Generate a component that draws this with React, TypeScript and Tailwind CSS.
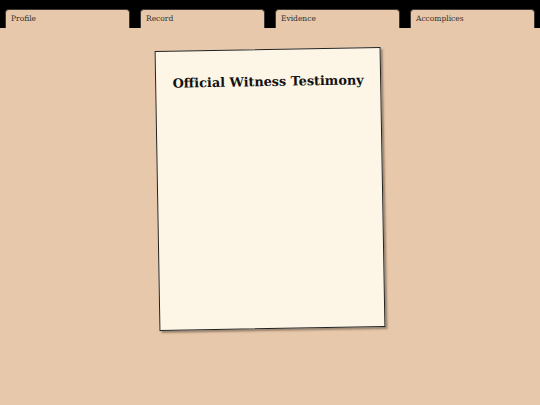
const tabs = ["Profile", "Record", "Evidence", "Accomplices"];

export default function App() {
  return (
    <div className="flex h-[405px] w-[540px] flex-col overflow-hidden bg-[#e8c8aa] font-['DejaVu_Serif',serif]">
      <nav className="flex h-[28px] shrink-0 items-end gap-[10px] bg-black px-[5px] pt-[9px]">
        {tabs.map((tab) => (
          <button
            key={tab}
            type="button"
            className="flex h-[19px] flex-1 items-center rounded-t-[4px] border-[1.5px] border-b-0 border-[#3d3833] bg-[#e8c8aa] px-[5px] text-left text-[7.5px] text-[#2e2e2e]"
          >
            {tab}
          </button>
        ))}
      </nav>

      <main className="flex flex-1 justify-center pt-[21px]">
        <div className="h-[280px] w-[226px] -rotate-1 border-[1.5px] border-[#222] bg-[#fdf5e6] px-3 pt-[22px] shadow-[2px_2px_2px_rgba(60,50,40,0.45)]">
          <h1 className="text-center text-[12.8px] font-bold text-[#111]">
            Official Witness Testimony
          </h1>
        </div>
      </main>
    </div>
  );
}
